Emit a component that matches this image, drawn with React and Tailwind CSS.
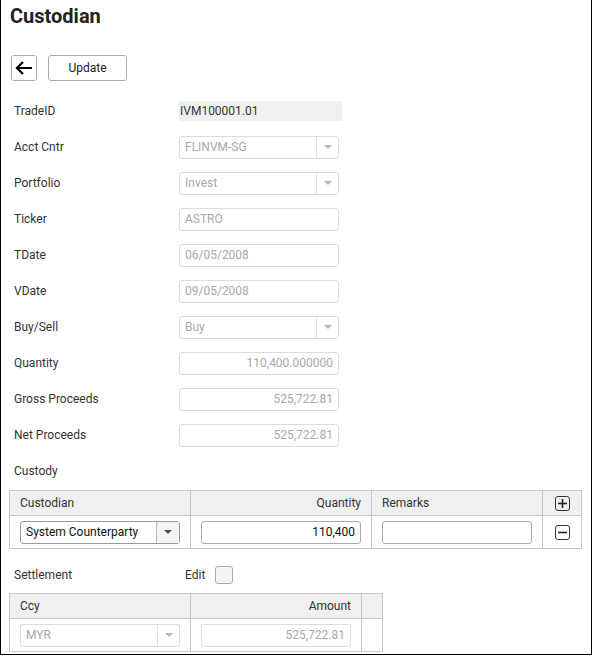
import { useState } from 'react'

const font = { fontFamily: 'Roboto, "Liberation Sans", sans-serif' }

// campo de texto deshabilitado
const Campo = ({ value, right, width = 'w-[160px]' }) => (
  <div className={`h-[23px] ${width} border border-[#dcdcdc] rounded-[3px] flex items-center px-[5px] text-[12px] text-[#a8a8a8] bg-white ${right ? 'justify-end' : ''}`}>
    {value}
  </div>
)

const Flecha = ({ color = '#b8b8b8' }) => (
  <svg width="8" height="4" viewBox="0 0 8 4"><path d="M0 0h8L4 4z" fill={color} /></svg>
)

const Combo = ({ value }) => (
  <div className="h-[23px] w-[160px] border border-[#dcdcdc] rounded-[3px] flex items-center text-[12px] text-[#a8a8a8] bg-white">
    <span className="flex-1 px-[5px]">{value}</span>
    <span className="w-[22px] h-full border-l border-[#e2e2e2] flex items-center justify-center">
      <Flecha />
    </span>
  </div>
)

const Fila = ({ label, children }) => (
  <div className="h-9 flex items-center">
    <div className="w-[178px] pl-[13px] text-[12px] text-[#333]">{label}</div>
    {children}
  </div>
)

const Cuadro = ({ sign }) => (
  <div className="w-[15px] h-[15px] border border-[#333] rounded-[3px] flex items-center justify-center">
    <svg width="9" height="9" viewBox="0 0 9 9">
      <path d="M0 4.5h9" stroke="#222" strokeWidth="1.6" />
      {sign === '+' && <path d="M4.5 0v9" stroke="#222" strokeWidth="1.6" />}
    </svg>
  </div>
)

export default function App() {
  const [edit, setEdit] = useState(false)

  return (
    <div className="w-[592px] h-[655px] border-x border-b border-black bg-white overflow-hidden" style={font}>
      <h1 className="pl-[9px] pt-[3px] text-[20px] leading-[26px] font-bold text-[#222]">Custodian</h1>

      <div className="flex gap-[11px] pl-[10px] mt-[26px]">
        <button className="w-[26px] h-[26px] border border-[#aaa] rounded-[3px] flex items-center justify-center bg-white">
          <svg width="18" height="14" viewBox="0 0 18 14">
            <path d="M17 7H2M8 1L2 7l6 6" stroke="#000" strokeWidth="2.2" fill="none" />
          </svg>
        </button>
        <button className="w-[79px] h-[26px] border border-[#aaa] rounded-[3px] text-[12px] text-[#222] bg-white">Update</button>
      </div>

      <div className="mt-[12px]">
        <Fila label="TradeID">
          <div className="h-[20px] w-[163px] bg-[#f0f0f0] flex items-center px-[1px] text-[12px] text-[#333]">IVM100001.01</div>
        </Fila>
        <Fila label="Acct Cntr"><Combo value="FLINVM-SG" /></Fila>
        <Fila label="Portfolio"><Combo value="Invest" /></Fila>
        <Fila label="Ticker"><Campo value="ASTRO" /></Fila>
        <Fila label="TDate"><Campo value="06/05/2008" /></Fila>
        <Fila label="VDate"><Campo value="09/05/2008" /></Fila>
        <Fila label="Buy/Sell"><Combo value="Buy" /></Fila>
        <Fila label="Quantity"><Campo value="110,400.000000" right /></Fila>
        <Fila label="Gross Proceeds"><Campo value="525,722.81" right /></Fila>
        <Fila label="Net Proceeds"><Campo value="525,722.81" right /></Fila>
        <Fila label="Custody" />
      </div>

      <div className="ml-[8px] mt-px w-[573px] border border-[#c8c8c8] text-[12px] text-[#333]">
        <div className="flex h-[25px] bg-[#f0f0f0] border-b border-[#c8c8c8]">
          <div className="w-[181px] border-r border-[#c8c8c8] flex items-center pl-[10px]">Custodian</div>
          <div className="w-[181px] border-r border-[#c8c8c8] flex items-center justify-end pr-[10px]">Quantity</div>
          <div className="w-[171px] border-r border-[#c8c8c8] flex items-center pl-[10px]">Remarks</div>
          <div className="flex-1 flex items-center justify-center"><Cuadro sign="+" /></div>
        </div>
        <div className="flex h-[32px]">
          <div className="w-[181px] border-r border-[#c8c8c8] flex items-center pl-[10px]">
            <div className="h-[23px] w-[160px] border border-[#999] rounded-[3px] flex items-center bg-white text-[#111]">
              <span className="flex-1 px-[5px]">System Counterparty</span>
              <span className="w-[23px] h-full border-l border-[#bbb] bg-[#f4f4f4] flex items-center justify-center">
                <Flecha color="#3d5266" />
              </span>
            </div>
          </div>
          <div className="w-[181px] border-r border-[#c8c8c8] flex items-center justify-end pr-[10px]">
            <div className="h-[23px] w-[160px] border border-[#aaa] rounded-[3px] flex items-center justify-end px-[5px] text-[#111]">110,400</div>
          </div>
          <div className="w-[171px] border-r border-[#c8c8c8] flex items-center pl-[10px]">
            <div className="h-[23px] w-[150px] border border-[#aaa] rounded-[3px]" />
          </div>
          <div className="flex-1 flex items-center justify-center"><Cuadro sign="-" /></div>
        </div>
      </div>

      <div className="h-9 mt-[8px] flex items-center text-[12px] text-[#333]">
        <div className="w-[184px] pl-[13px]">Settlement</div>
        <div>Edit</div>
        <button
          onClick={() => setEdit(!edit)}
          className="ml-[10px] w-[18px] h-[18px] border border-[#aaa] rounded-[3px] bg-[#f4f4f4]"
        />
      </div>

      <div className="ml-[8px] w-[374px] border border-[#c8c8c8] text-[12px] text-[#333]">
        <div className="flex h-[25px] bg-[#f0f0f0] border-b border-[#c8c8c8]">
          <div className="w-[181px] border-r border-[#c8c8c8] flex items-center pl-[10px]">Ccy</div>
          <div className="w-[171px] border-r border-[#c8c8c8] flex items-center justify-end pr-[10px]">Amount</div>
          <div className="flex-1" />
        </div>
        <div className="flex h-[32px]">
          <div className="w-[181px] border-r border-[#c8c8c8] flex items-center pl-[10px]">
            <Combo value="MYR" />
          </div>
          <div className="w-[171px] border-r border-[#c8c8c8] flex items-center justify-end pr-[10px]">
            <Campo value="525,722.81" right width="w-[150px]" />
          </div>
          <div className="flex-1" />
        </div>
      </div>
    </div>
  )
}
